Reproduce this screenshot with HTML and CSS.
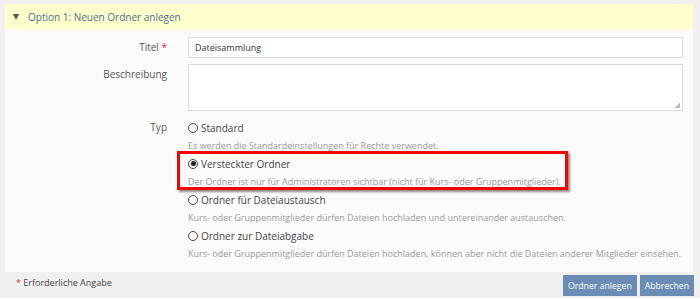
FILE: index.html
```html
<!DOCTYPE html>
<html lang="de">
<head>
  <meta charset="UTF-8">
  <title>Ordner anlegen</title>
  <link rel="stylesheet" href="styles.css">
</head>
<body>
  <div class="panel">
    <div class="panel-head"><span class="caret"></span>Option 1: Neuen Ordner anlegen</div>
    <div class="panel-body">
      <div class="row">
        <label class="row-label">Titel <span class="req">*</span></label>
        <div class="row-field"><div class="input">Dateisammlung</div></div>
      </div>
      <div class="row">
        <label class="row-label">Beschreibung</label>
        <div class="row-field"><div class="textarea"><span class="grip"></span></div></div>
      </div>
      <div class="row row-typ">
        <label class="row-label">Typ</label>
        <div class="row-field">
          <div class="opt">
            <div class="opt-title"><span class="radio"></span>Standard</div>
            <div class="opt-desc">Es werden die Standardeinstellungen für Rechte verwendet.</div>
          </div>
          <div class="opt">
            <div class="opt-title"><span class="radio checked"></span>Versteckter Ordner</div>
            <div class="opt-desc">Der Ordner ist nur für Administratoren sichtbar (nicht für Kurs- oder Gruppenmitglieder).</div>
            <span class="marker"></span>
          </div>
          <div class="opt">
            <div class="opt-title"><span class="radio"></span>Ordner für Dateiaustausch</div>
            <div class="opt-desc">Kurs- oder Gruppenmitglieder dürfen Dateien hochladen und untereinander austauschen.</div>
          </div>
          <div class="opt">
            <div class="opt-title"><span class="radio"></span>Ordner zur Dateiabgabe</div>
            <div class="opt-desc">Kurs- oder Gruppenmitglieder dürfen Dateien hochladen, können aber nicht die Dateien anderer Mitglieder einsehen.</div>
          </div>
        </div>
      </div>
    </div>
  </div>
  <div class="footer">
    <div class="note"><span class="req">*</span> Erforderliche Angabe</div>
    <div class="buttons">
      <button class="btn">Ordner anlegen</button>
      <button class="btn">Abbrechen</button>
    </div>
  </div>
</body>
</html>
```

FILE: styles.css
```css
body {
  margin: 0;
  padding: 4px 7px 0 5px;
  background: #f0f0f0;
  font-family: "Open Sans", "Liberation Sans", sans-serif;
  font-size: 10px;
  line-height: 14px;
  color: #555;
}
.panel { background: #fbfbfb; }
.panel-head {
  height: 25px;
  display: flex;
  align-items: center;
  background: #ffffcc;
  color: #4a6f90;
  font-size: 10px;
  padding-left: 8px;
}
.caret {
  width: 0;
  height: 0;
  border-left: 3.5px solid transparent;
  border-right: 3.5px solid transparent;
  border-top: 6px solid #555;
  margin-right: 9px;
}
.panel-body { padding: 8px 10px 9px 0; }
.row { display: flex; margin-bottom: 6px; }
.row-label {
  flex-shrink: 0;
  width: 162px;
  text-align: right;
  padding-top: 3px;
  margin-right: 21px;
  color: #555;
}
.row-field { flex: 1; min-width: 0; }
.req { color: #e03030; }
.input {
  height: 19px;
  border: 1px solid #ddd;
  background: #fff;
  font-size: 9px;
  color: #333;
  line-height: 19px;
  padding-left: 6px;
}
.textarea {
  position: relative;
  height: 45px;
  border: 1px solid #ddd;
  background: #fff;
}
.grip {
  position: absolute;
  right: 2px;
  bottom: 2px;
  width: 5px;
  height: 5px;
  background: linear-gradient(135deg, transparent 50%, #bbb 50%);
}
.row-typ { margin-top: 8px; margin-bottom: 0; }
.row-typ .row-label { padding-top: 1px; }
.opt { position: relative; width: max-content; }
.opt-title {
  display: flex;
  align-items: center;
  height: 17px;
  color: #444;
  font-size: 10px;
}
.opt-desc {
  height: 19px;
  line-height: 19px;
  font-size: 9px;
  color: #9a9a9a;
}
.radio {
  width: 8px;
  height: 8px;
  border: 1px solid #444;
  border-radius: 50%;
  margin-right: 3px;
  display: inline-flex;
  align-items: center;
  justify-content: center;
}
.radio.checked::after {
  content: "";
  width: 5px;
  height: 5px;
  border-radius: 50%;
  background: #222;
}
.marker {
  position: absolute;
  left: -11px;
  right: -7px;
  top: -4px;
  bottom: 1px;
  border: 3px solid #f00;
  box-shadow: 2px 2px 2px rgba(0, 0, 0, 0.45);
}
.footer {
  display: flex;
  justify-content: space-between;
  align-items: flex-start;
  padding: 3px 0 0 11px;
}
.note { font-size: 9px; color: #444; padding-top: 1px; }
.buttons { display: flex; gap: 3px; margin-right: -1px; }
.btn {
  height: 21px;
  padding: 0 5px;
  border: none;
  background: #6b8db5;
  color: #fff;
  font-family: "Open Sans", "Liberation Sans", sans-serif;
  font-size: 8.7px;
}
```
